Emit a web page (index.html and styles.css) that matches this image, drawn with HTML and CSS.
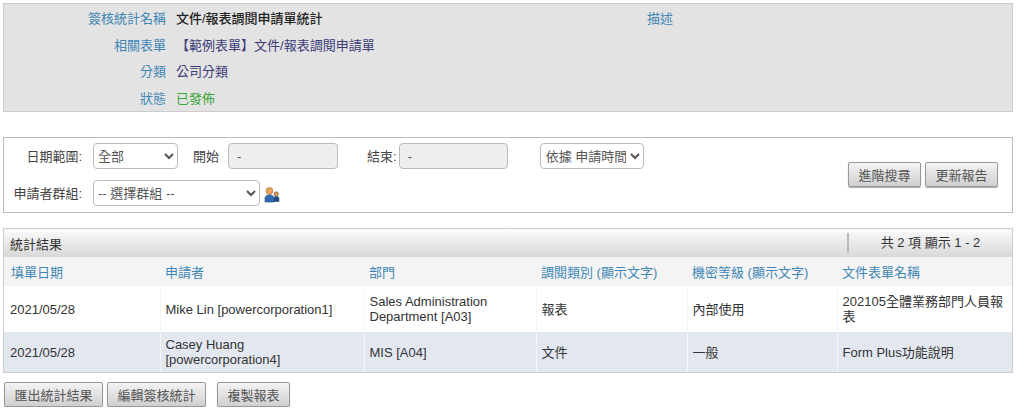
FILE: index.html
```html
<!DOCTYPE html>
<html lang="zh-Hant">
<head>
    <meta charset="UTF-8">
    <title>文件/報表調閱申請單統計</title>
    <link rel="stylesheet" href="styles.css">
</head>
<body>

<div class="info-box">
    <div class="info-main">
        <div class="info-row">
            <span class="info-label">簽核統計名稱</span>
            <span class="info-title">文件/報表調閱申請單統計</span>
        </div>
        <div class="info-row">
            <span class="info-label">相關表單</span>
            <span class="info-value"><span class="form-tag">【範例表單】</span>文件/報表調閱申請單</span>
        </div>
        <div class="info-row">
            <span class="info-label">分類</span>
            <span class="info-value">公司分類</span>
        </div>
        <div class="info-row">
            <span class="info-label">狀態</span>
            <span class="info-status">已發佈</span>
        </div>
    </div>
    <div class="info-side">描述</div>
</div>

<div class="filter-box">
    <div class="filter-fields">
        <div class="filter-row">
            <label class="filter-label">日期範圍:</label>
            <select class="field range-select"><option>全部</option></select>
            <label class="start-label">開始</label>
            <input class="field date-input" type="text" value="-" disabled>
            <label class="end-label">結束:</label>
            <input class="field date-input end-input" type="text" value="-" disabled>
            <select class="field basis-select"><option>依據 申請時間</option></select>
        </div>
        <div class="filter-row">
            <label class="filter-label">申請者群組:</label>
            <select class="field group-select"><option>-- 選擇群組 --</option></select>
            <svg class="group-icon" width="16" height="16" viewBox="0 0 16 16">
                <circle cx="12.2" cy="7" r="2.2" fill="#d99a5b" stroke="#5a3d20" stroke-width=".5"/>
                <path d="M10 14.5V11.5C10 10 11 9.5 12.3 9.5S15 10 15 11.5V14.5Z" fill="#234f86" stroke="#15305a" stroke-width=".5"/>
                <circle cx="5.5" cy="4" r="3.4" fill="#eba35c" stroke="#a8682a" stroke-width=".6"/>
                <path d="M1 15V11.5C1 9 3 8 5.5 8S10 9 10 11.5V15Z" fill="#2f6cb5" stroke="#1d3f73" stroke-width=".6"/>
            </svg>
        </div>
    </div>
    <div class="filter-actions">
        <button class="btn">進階搜尋</button>
        <button class="btn">更新報告</button>
    </div>
</div>

<div class="result-box">
    <div class="result-bar">
        <span class="result-title">統計結果</span>
        <span class="result-count">共 2 項 顯示 1 - 2</span>
    </div>
    <table class="result-table">
        <colgroup>
            <col class="col-date">
            <col class="col-user">
            <col class="col-dept">
            <col class="col-type">
            <col class="col-level">
            <col>
        </colgroup>
        <thead>
            <tr>
                <th>填單日期</th>
                <th>申請者</th>
                <th>部門</th>
                <th>調閱類別 (顯示文字)</th>
                <th>機密等級 (顯示文字)</th>
                <th>文件表單名稱</th>
            </tr>
        </thead>
        <tbody>
            <tr class="row-first">
                <td>2021/05/28</td>
                <td>Mike Lin [powercorporation1]</td>
                <td>Sales Administration Department [A03]</td>
                <td>報表</td>
                <td>內部使用</td>
                <td>202105全體業務部門人員報表</td>
            </tr>
            <tr class="row-alt">
                <td>2021/05/28</td>
                <td>Casey Huang [powercorporation4]</td>
                <td>MIS [A04]</td>
                <td>文件</td>
                <td>一般</td>
                <td>Form Plus功能說明</td>
            </tr>
        </tbody>
    </table>
</div>

<div class="page-actions">
    <button class="btn">匯出統計結果</button>
    <button class="btn">編輯簽核統計</button>
    <button class="btn btn-gap">複製報表</button>
</div>

</body>
</html>
```

FILE: styles.css
```css
body {
    margin: 0;
    padding: 3px 11px 0 3px;
    background-color: white;
    color: #333;
    font-family: "Liberation Sans", "Noto Sans CJK TC", sans-serif;
    font-size: 13px;
}

/* top summary */
.info-box {
    display: flex;
    height: 109px;
    box-sizing: border-box;
    margin-bottom: 25px;
    background-color: #e3e3e3;
    border: 1px solid #ccc;
}
.info-main {
    width: 643px;
}
.info-row {
    display: flex;
    height: 26.7px;
    align-items: center;
}
.info-label {
    width: 162px;
    margin-right: 10px;
    text-align: right;
    color: #3f86b5;
}
.info-title {
    color: #222;
    font-weight: 500;
}
.info-value {
    color: #3c3c78;
}
.form-tag {
    margin-left: 0;
}
.info-status {
    color: #3aa63a;
}
.info-side {
    padding-top: 4px;
    color: #3f86b5;
}

/* filter */
.filter-box {
    display: flex;
    height: 76px;
    box-sizing: border-box;
    margin-bottom: 15px;
    padding: 5px 14px 0 0;
    justify-content: space-between;
    border: 1px solid #bbb;
}
.filter-row {
    display: flex;
    align-items: center;
    height: 26px;
    margin-bottom: 11px;
}
.filter-label {
    width: 78px;
    margin-right: 11px;
    padding-bottom: 2px;
    text-align: right;
    color: #444;
}
.field {
    height: 26px;
    box-sizing: border-box;
    border: 1px solid #bbb;
    border-radius: 4px;
    background-color: white;
    color: #555;
    font-family: inherit;
    font-size: 13px;
    padding: 0;
}
.range-select {
    width: 85px;
}
.group-select {
    width: 167px;
}
.start-label {
    margin: 0 9px 0 15px;
    padding-bottom: 2px;
    color: #444;
}
.date-input {
    width: 110px;
    padding: 0 8px;
    background-color: #eee;
}
.end-label {
    margin: 0 2px 0 29px;
    padding-bottom: 2px;
    color: #444;
}
.end-input {
    width: 109px;
    margin-right: 32px;
}
.basis-select {
    width: 104px;
    padding: 0 1px;
}
.group-icon {
    margin: 4px 0 0 4px;
}
.filter-actions {
    display: flex;
    gap: 4px;
    padding-top: 19px;
}

/* buttons */
.btn {
    height: 25px;
    padding: 0 9.5px;
    border: 1px solid #999;
    border-radius: 2px;
    background: linear-gradient(#f4f4f4, #cfcfcf);
    box-shadow: 0 1px 1px #aaa;
    color: #555;
    font-family: inherit;
    font-size: 13px;
}

/* results */
.result-box {
    border: 1px solid #ccc;
    margin-bottom: 9px;
}
.result-bar {
    display: flex;
    height: 28px;
    align-items: center;
    justify-content: space-between;
    padding-left: 6px;
    background: linear-gradient(#fbfbfb, #d8d8d8);
    color: #333;
}
.result-count {
    width: 163px;
    height: 20px;
    line-height: 20px;
    text-align: center;
    border-left: 2px solid #bbb;
}
.result-table {
    width: 100%;
    border-collapse: collapse;
    table-layout: fixed;
}
.col-date {
    width: 156px;
}
.col-user {
    width: 204px;
}
.col-dept {
    width: 172px;
}
.col-type {
    width: 151px;
}
.col-level {
    width: 150px;
}
.result-table th {
    height: 29px;
    padding: 0 5px;
    background-color: #f4f4f4;
    color: #3f86b5;
    font-weight: normal;
    text-align: left;
}
.result-table td {
    padding: 0 5px;
    line-height: 15px;
    border-left: 1px solid #f4f6f9;
}
.result-table td:first-child {
    border-left: none;
    padding-left: 6px;
}
.result-table th:first-child {
    padding-left: 7px;
}
.row-first td {
    height: 46px;
}
.row-alt td {
    height: 40px;
    background-color: #e3e8f0;
}

.page-actions {
    display: flex;
    gap: 4px;
    padding-left: 1px;
}
.btn-gap {
    margin-left: 7px;
}
```
